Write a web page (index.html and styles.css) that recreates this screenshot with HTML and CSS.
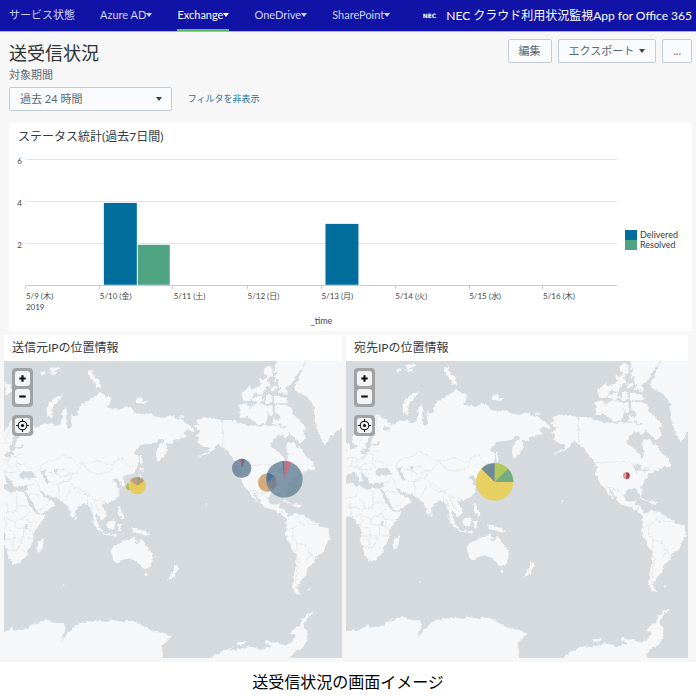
FILE: index.html
```html
<!DOCTYPE html>
<html lang="ja">
<head>
<meta charset="utf-8">
<meta name="viewport" content="width=device-width, initial-scale=1">
<title>送受信状況</title>
<link rel="stylesheet" href="styles.css">
</head>
<body>
<svg class="defs" aria-hidden="true">
  <defs>
    <filter id="coast" x="0" y="0" width="1100" height="1000" filterUnits="userSpaceOnUse">
      <feTurbulence type="fractalNoise" baseFrequency="0.09" numOctaves="3" seed="4" result="n"/>
      <feDisplacementMap in="SourceGraphic" in2="n" scale="13" xChannelSelector="R" yChannelSelector="G"/>
    </filter>
    <g id="world">
      <rect class="sea" x="0" y="0" width="1100" height="1000"/>
      <g filter="url(#coast)">
        <g class="land">
          <!-- Eurasia and Africa -->
          <path d="M0 350 18 352 34 344 46 338 55 332 42 330 36 318 38 302 55 290 64 270 78 252 96 242 112 237 124 246 140 256 152 264 150 276 136 274 130 270 133 285 146 288 150 274 164 268 176 260 196 256 214 262 230 256 234 236 236 214 246 208 250 228 246 256 254 272 264 262 260 242 258 222 268 236 280 232 282 214 298 196 320 184 336 172 348 162 362 175 380 178 378 194 368 206 384 212 410 214 430 205 446 212 452 226 470 228 490 226 510 235 540 240 560 232 576 240 590 246 606 256 626 272 628 282 606 275 598 286 612 296 594 300 576 306 562 318 546 314 546 322 548 336 540 354 524 372 515 358 518 334 530 318 542 306 526 306 514 314 492 318 470 320 456 334 450 350 464 354 463 374 456 394 440 408 426 412 416 418 424 440 414 444 408 428 398 420 386 426 394 434 398 446 408 456 408 468 396 484 380 492 366 496 352 500 358 512 366 520 368 534 356 545 346 540 340 526 335 532 340 555 349 576 336 562 326 536 320 512 310 499 300 495 290 502 276 516 266 542 258 522 248 502 238 494 224 480 200 476 184 468 173 458 168 462 182 480 206 488 212 500 196 512 166 530 158 520 142 492 129 462 120 462 134 494 150 520 162 532 184 528 178 544 164 562 150 582 152 604 140 620 132 640 124 658 104 676 86 680 77 664 68 636 61 620 65 592 55 566 44 552 30 544 0 540Z"/>
          <!-- North America -->
          <path d="M640 246 662 236 690 240 716 250 746 247 766 256 800 262 830 266 852 260 880 264 906 270 922 280 912 288 896 290 880 292 868 306 862 322 874 338 892 348 904 368 912 362 910 344 904 326 912 312 930 316 944 328 956 336 962 352 984 370 992 390 974 396 956 404 940 410 924 420 914 438 900 456 907 474 903 484 894 466 880 461 858 466 851 482 860 499 876 500 888 494 884 510 898 512 905 524 912 536 926 542 916 548 902 540 888 526 868 516 846 510 828 490 814 466 805 460 814 478 824 494 810 482 794 458 780 446 768 420 771 396 762 378 746 360 732 338 714 326 700 318 690 336 664 350 638 358 672 340 680 330 660 326 640 314 646 300 634 290 650 284 640 270 628 266 642 258Z"/>
          <!-- South America -->
          <path d="M904 555 918 535 936 527 960 531 975 542 1000 556 1010 568 1034 575 1041 592 1030 616 1016 642 998 656 988 676 974 690 966 710 954 726 944 740 941 756 952 772 934 766 925 742 930 710 936 680 938 652 924 636 914 610 904 590 908 574Z"/>
          <!-- Greenland -->
          <path d="M972 40 962 84 944 120 930 148 944 166 966 174 984 194 994 222 992 248 1002 280 1014 312 1026 322 1036 300 1054 282 1080 264 1100 258 1100 40Z"/>
          <!-- Canadian Arctic -->
          <path d="M890 40 876 76 868 104 882 100 868 130 886 126 882 148 896 146 878 164 912 168 906 148 926 134 940 106 958 90 968 40Z"/>
          <path d="M838 92 862 84 868 118 848 120ZM826 124 854 120 858 146 832 148ZM778 160 798 144 806 156 830 142 846 154 832 172 812 166 800 188 780 190 770 176ZM766 202 786 194 802 216 796 238 768 236ZM802 202 826 196 850 206 852 236 844 258 818 260 806 246 794 240ZM804 182 828 172 842 186 818 198ZM846 168 864 168 866 196 846 196ZM850 204 864 202 868 230 854 232ZM862 146 880 144 876 158 860 160Z"/>
          <path d="M870 172 906 180 914 196 870 196ZM870 202 902 200 922 208 930 232 948 246 968 274 956 284 966 304 950 316 930 298 910 282 906 262 896 266 882 252 890 236 876 224ZM868 240 888 250 882 262 864 258ZM894 284 910 280 916 294 902 300Z"/>
          <!-- Australia and Oceania -->
          <path d="M380 640 386 625 400 620 414 612 426 602 440 603 452 597 454 610 464 620 472 598 480 612 486 626 500 640 509 655 504 676 492 692 476 691 466 678 454 672 440 660 416 665 400 675 388 673 386 656Z"/>
          <path d="M478 704 492 706 486 716ZM573 680 586 692 574 706 566 702ZM566 704 572 710 560 726 548 728ZM438 568 458 572 484 580 502 594 480 592 464 586 450 582ZM368 558 388 542 396 556 388 574 372 572ZM320 542 340 560 362 582 350 584 334 564ZM358 584 400 590 402 595 360 590ZM402 562 416 560 408 568 412 580 402 578ZM400 505 410 510 412 524 422 540 412 544 404 522ZM162 612 180 602 174 638 160 644Z"/>
          <!-- Japan, Sakhalin, Arctic islands -->
          <path d="M468 344 474 352 474 382 468 376ZM466 388 482 396 468 402ZM468 406 474 424 456 436 436 440 430 450 428 440 448 430 464 418ZM238 168 228 184 210 200 203 222 208 240 190 236 187 214 200 190 220 174ZM312 96 326 98 330 118 346 130 352 150 336 146 330 130 316 118ZM166 104 184 98 188 108 172 112ZM194 90 224 86 226 96 200 100ZM194 104 220 102 208 112ZM455 180 472 178 476 190 494 188 480 198 456 194ZM586 232 600 234 590 240ZM60 130 78 140 82 160 66 172ZM18 326 30 330 30 352 18 356ZM272 532 280 540 274 546ZM894 486 920 494 926 500 906 494ZM932 498 954 502 950 508 930 504ZM970 752 980 754 974 758ZM980 382 994 386 992 396 976 392ZM236 738 242 740 240 744ZM664 496 670 500 666 504Z"/>
          <!-- Antarctica -->
          <path d="M0 890 40 886 62 884 82 868 90 878 130 870 156 856 188 844 216 856 240 856 244 876 230 912 250 884 284 856 320 850 342 848 370 852 380 844 404 850 450 848 476 862 504 880 532 880 560 896 548 912 532 924 538 952 540 1000 0 1000ZM640 1000 690 950 728 936 752 924 734 938 770 932 800 924 832 936 864 924 838 914 848 908 872 914 904 920 926 910 936 894 918 884 934 870 948 862 952 846 972 828 990 820 966 846 960 866 970 880 970 906 956 930 928 944 918 962 944 1000ZM758 912 782 912 780 922 760 920ZM1048 1000 1060 968 1080 954 1100 950 1100 1000Z"/>
        </g>
        <g class="sea">
          <path d="M0 432 20 420 40 412 50 420 62 440 70 430 60 414 70 412 84 434 92 446 130 442 132 456 118 462 96 458 82 466 60 452 44 452 40 444 20 446 0 452Z"/>
          <path d="M106 408 118 398 130 402 140 398 156 414 140 422 108 420ZM172 400 188 392 184 404 190 424 196 434 182 436 178 416ZM210 392 220 390 218 402 210 402ZM96 290 106 292 98 310 92 326 102 330 90 336 84 354 64 360 60 346 74 342 84 318 84 302ZM100 324 120 322 118 330 102 332ZM122 560 132 562 128 572 122 568Z"/>
          <path d="M876 392 892 388 906 394 900 400 906 410 894 402 888 416 884 402ZM906 408 928 400 922 408 908 414Z"/>
        </g>
        <g class="border">
          <path d="M716 250V328M764 382H868M868 382 908 404 936 392M798 456 836 468 852 482M870 516 876 504M888 524 898 514"/>
          <path d="M172 400 170 384 190 370 216 364 236 350 262 362 290 378 316 376 340 368 366 376 388 382 396 366 416 360 430 382 452 388M300 380 314 400 346 410 380 400 388 384M296 382 280 400 262 412 256 430 274 446 300 460 318 468 330 488 350 486 368 496M192 404 214 404 232 416 256 410M196 434 222 440 240 430 256 430M222 440 226 478M240 494 250 474 262 446M274 446 270 456 296 470 312 470 310 498M150 424 164 440 170 462M130 444 150 440M136 468 152 466 170 480M158 520 182 508 196 490M330 490 342 512 352 528M320 492 324 520M164 400 180 372M214 402 240 394 262 412"/>
          <path d="M18 490 46 484 72 502 72 520 98 520 98 468M98 504 134 504M72 520 66 540 92 552 120 540 140 516M22 516 60 520M50 484 52 458M40 540 60 536 66 556 60 572 88 580 90 600 64 604M92 552 96 570 124 570 150 584M120 540 138 550 162 556M120 570 118 596 148 604M90 600 112 606 118 596M88 608 86 640 70 640M112 606 106 630 88 640M106 630 124 642M138 550 138 576M30 500 34 544"/>
          <path d="M18 372 38 366 52 374 70 366 72 388 98 384 106 404M38 366 34 390 18 400M52 374 50 398 34 392M50 398 74 404 96 402M72 388 62 400 66 414M74 404 88 420M70 366 96 354 116 346M96 354 100 380 124 378 146 392M112 242 106 264 112 290M58 330 64 302 82 262 108 250"/>
          <path d="M944 530 948 556 968 560 974 544M948 556 926 574 908 576M968 560 1000 560M926 574 926 600 942 616 966 622 974 640 990 660M942 616 938 640M966 640 978 652 970 668M938 650 944 680 936 720 936 750M988 538 990 556"/>
        </g>
      </g>
    </g>
    <g id="locate">
      <circle cx="7" cy="7" r="4" fill="none" stroke="currentColor"/>
      <path d="M7 1v2M7 11v2M1 7h2M11 7h2" stroke="currentColor"/>
      <circle cx="7" cy="7" r="1.500" fill="currentColor"/>
    </g>
  </defs>
</svg>

<header class="topbar">
  <nav class="nav" aria-label="メイン">
    <a href="#">サービス状態</a>
    <a href="#">Azure AD<i class="caret"></i></a>
    <a href="#" class="active" aria-current="page">Exchange<i class="caret"></i></a>
    <a href="#">OneDrive<i class="caret"></i></a>
    <a href="#">SharePoint<i class="caret"></i></a>
  </nav>
  <div class="brand"><span class="logo">NEC</span><span>NEC クラウド利用状況監視App for Office 365</span></div>
</header>

<main class="page">
  <section class="head">
    <div class="intro">
      <h1>送受信状況</h1>
      <label for="period">対象期間</label>
    </div>
    <div class="actions">
      <button type="button" class="btn">編集</button>
      <button type="button" class="btn">エクスポート<i class="caret"></i></button>
      <button type="button" class="btn">...</button>
    </div>
  </section>
  <div class="filters">
    <div class="select">
      <select id="period"><option>過去 24 時間</option></select>
      <i class="caret"></i>
    </div>
    <a href="#">フィルタを非表示</a>
  </div>

  <section class="panel stats">
    <h2>ステータス統計(過去7日間)</h2>
    <div class="chart">
      <svg class="plot" viewBox="0 0 612 180" role="img" aria-label="ステータス統計">
        <path class="grid" d="M17 10H609M17 52H609M17 94H609"/>
        <path class="axis" d="M17 139V136H609M91 136V139M164 136V139M239 136V139M313 136V139M387 136V139M461 136V139M534 136V139"/>
        <g class="delivered"><rect x="95" y="53" width="33" height="82"/><rect x="317" y="74" width="33" height="61"/></g>
        <rect class="resolved" x="129" y="95" width="32" height="40"/>
        <g class="ylab"><text x="13" y="14">6</text><text x="13" y="56">4</text><text x="13" y="98">2</text></g>
        <g class="xlab">
          <text x="17" y="149">5/9 (木)</text><text x="17" y="160">2019</text>
          <text x="91" y="149">5/10 (金)</text><text x="165" y="149">5/11 (土)</text>
          <text x="239" y="149">5/12 (日)</text><text x="313" y="149">5/13 (月)</text>
          <text x="387" y="149">5/14 (火)</text><text x="461" y="149">5/15 (水)</text>
          <text x="535" y="149">5/16 (木)</text>
        </g>
        <text class="xtitle" x="313" y="174">_time</text>
      </svg>
      <ul class="legend">
        <li><i class="key-delivered"></i>Delivered</li>
        <li><i class="key-resolved"></i>Resolved</li>
      </ul>
    </div>
  </section>

  <div class="maps">
    <section class="panel">
      <h2>送信元IPの位置情報</h2>
      <div class="map">
        <svg viewBox="60 69 1014 891" role="img" aria-label="送信元IPの地図">
          <use href="#world"/>
          <g opacity=".85">
            <circle cx="436" cy="446" r="10" fill="#a9b84a"/>
            <circle cx="460" cy="443" r="26" fill="#e8cb45"/>
            <path d="M460 443 438 429A26 26 0 0 1 460 417Z" fill="#bd9072"/>
            <path d="M460 443V417A26 26 0 0 1 470 419Z" fill="#4a9b78"/>
            <path d="M460 443 470 419A26 26 0 0 1 481 428Z" fill="#c28860"/>
          </g>
          <g opacity=".8">
            <circle cx="773" cy="391" r="29" fill="#617c91"/>
            <path d="M773 391 766 363A29 29 0 0 1 773 362Z" fill="#a64b65"/>
            <path d="M773 391V362A29 29 0 0 1 783 364Z" fill="#374a79"/>
            <circle cx="850" cy="434" r="28" fill="#ce995f"/>
            <path d="M850 434V406A28 28 0 0 1 877 426Z" fill="#3e6f9b"/>
          </g>
          <g opacity=".85">
            <circle cx="901" cy="424" r="55" fill="#6c889a"/>
            <path d="M901 424V369A55 55 0 0 1 921 373Z" fill="#c95868"/>
            <path d="M901 424 895 369H901Z" fill="#3f6798"/>
            <path d="M849 406A28 28 0 0 1 878 434 28 28 0 0 1 868 455 55 55 0 0 1 849 406Z" fill="#6e6f82" opacity=".5"/>
            <path d="M850 406A28 28 0 0 1 868 413L850 434Z" fill="#356b94" opacity=".7"/>
          </g>
        </svg>
        <div class="controls">
          <div class="ctl"><button type="button" aria-label="拡大"><svg viewBox="0 0 14 14"><path d="M7 4v6M4 7h6" stroke="currentColor" stroke-width="2"/></svg></button><button type="button" aria-label="縮小"><svg viewBox="0 0 14 14"><path d="M4 7h6" stroke="currentColor" stroke-width="2"/></svg></button></div>
          <div class="ctl"><button type="button" aria-label="現在地"><svg viewBox="0 0 14 14"><use href="#locate"/></svg></button></div>
        </div>
      </div>
    </section>
    <section class="panel">
      <h2>宛先IPの位置情報</h2>
      <div class="map">
        <svg viewBox="18 78 1026 891" role="img" aria-label="宛先IPの地図">
          <use href="#world"/>
          <g opacity=".9">
            <circle cx="464" cy="441" r="56" fill="#e8cf55"/>
            <path d="M464 441V385A56 56 0 0 1 504 401Z" fill="#afc44c"/>
            <path d="M464 441 504 401A56 56 0 0 1 520 441Z" fill="#69a877"/>
            <path d="M464 441 424 401A56 56 0 0 1 464 385Z" fill="#63828c"/>
          </g>
          <circle cx="859" cy="422" r="10" fill="#d4a09b"/>
          <path d="M859 412A10 10 0 0 1 859 432Z" fill="#b23d50"/>
        </svg>
        <div class="controls">
          <div class="ctl"><button type="button" aria-label="拡大"><svg viewBox="0 0 14 14"><path d="M7 4v6M4 7h6" stroke="currentColor" stroke-width="2"/></svg></button><button type="button" aria-label="縮小"><svg viewBox="0 0 14 14"><path d="M4 7h6" stroke="currentColor" stroke-width="2"/></svg></button></div>
          <div class="ctl"><button type="button" aria-label="現在地"><svg viewBox="0 0 14 14"><use href="#locate"/></svg></button></div>
        </div>
      </div>
    </section>
  </div>
</main>
<p class="caption">送受信状況の画面イメージ</p>
</body>
</html>
```
FILE: styles.css
```css
* {
  box-sizing: border-box;
}

body {
  margin: 0;
  background: #fff;
  color: #333c45;
  font-family: Lato, "Noto Sans CJK JP", sans-serif;
  font-size: 11px;
  line-height: 16px;
}

h1,
h2,
p,
ul {
  margin: 0;
  padding: 0;
  font-weight: 400;
}

a {
  text-decoration: none;
}

.defs {
  position: absolute;
  width: 0;
  height: 0;
}

.caret {
  display: inline-block;
  border: 3px solid transparent;
  border-top: 4px solid currentColor;
  border-bottom: 0;
  vertical-align: 2px;
}

.topbar {
  display: flex;
  justify-content: space-between;
  height: 32px;
  padding: 0 4px 0 9px;
  background: #1013a5;
  border-bottom: 1px solid #aaaed8;
  color: #fff;
  white-space: nowrap;
}

.nav {
  display: flex;
  gap: 25px;
}

.nav a {
  color: #d3d5f2;
  line-height: 30px;
}

.nav .active {
  color: #fff;
  border-bottom: 2px solid #5cc05c;
}

.brand {
  display: flex;
  align-items: center;
  gap: 10px;
  font-size: 12px;
}

.logo {
  font: bold 6px/8px "DejaVu Sans", sans-serif;
}

.page {
  background: #f7f7f7;
  padding: 7px 4px 4px;
}

.head {
  display: flex;
  justify-content: space-between;
  padding-left: 5px;
}

h1 {
  font-size: 18px;
  line-height: 28px;
  color: #2b3033;
}

.intro label {
  display: block;
  color: #5c6773;
}

.actions {
  display: flex;
  align-items: flex-start;
  gap: 6px;
}

.btn {
  height: 24px;
  padding: 0 10px;
  border: 1px solid #c3cbd4;
  border-radius: 2px;
  background: #f9fbfd;
  color: #5c6773;
  font: inherit;
  line-height: 20px;
}

.btn .caret {
  margin-left: 5px;
  color: #3c444d;
}

.filters {
  display: flex;
  align-items: center;
  gap: 16px;
  margin: 4px 5px 12px;
}

.filters a {
  color: #1e7393;
  font-size: 9px;
}

.select {
  position: relative;
  width: 24%;
}

.select select {
  display: block;
  appearance: none;
  width: 100%;
  height: 24px;
  padding: 0 10px;
  border: 1px solid #c3cbd4;
  border-radius: 2px;
  background: #f9fbfd;
  color: #5c6773;
  font: inherit;
}

.select .caret {
  position: absolute;
  top: 10px;
  right: 10px;
  color: #3c444d;
  pointer-events: none;
}

.panel {
  background: #fff;
}

.panel h2 {
  padding: 5px 8px;
  font-size: 12px;
}

.stats {
  margin: 0 0 4px 5px;
}

.stats h2 {
  padding: 6px 9px 5px;
}

.chart {
  display: flex;
  align-items: center;
  gap: 5px;
  padding: 0 14px 1px 0;
}

.plot {
  flex: 1;
  min-width: 0;
  display: block;
}

.plot text {
  fill: #3f4750;
  font-size: 8px;
}

.grid,
.axis {
  fill: none;
  stroke: #e3e6e8;
  shape-rendering: crispEdges;
}

.axis {
  stroke: #c3cbd4;
}

.delivered {
  fill: #006d9c;
}

.resolved {
  fill: #4fa484;
}

.ylab {
  text-anchor: end;
}

.plot .xtitle {
  text-anchor: middle;
  font-size: 9px;
}

.legend {
  list-style: none;
  font-size: 9px;
  line-height: 10px;
}

.legend li {
  display: flex;
  gap: 3px;
}

.legend i {
  width: 12px;
}

.key-delivered {
  background: #006d9c;
}

.key-resolved {
  background: #4fa484;
}

.maps {
  display: grid;
  grid-template-columns: 338fr 342fr;
  gap: 4px;
  margin-right: 4px;
}

.map {
  position: relative;
}

.map > svg {
  display: block;
  width: 100%;
  height: auto;
}

.sea {
  fill: #d5dadf;
}

.land {
  fill: #f6f7f8;
}

.border {
  fill: none;
  stroke: #dcdfe2;
  stroke-width: 2;
}

.controls {
  position: absolute;
  top: 7px;
  left: 8px;
  display: grid;
  gap: 8px;
}

.ctl {
  display: grid;
  gap: 3px;
  padding: 3px;
  border-radius: 4px;
  background: #a0a3a6;
}

.ctl button {
  width: 15px;
  height: 15px;
  padding: 0;
  border: 0;
  border-radius: 3px;
  background: #f3f4f5;
  color: #111;
}

.ctl svg {
  display: block;
  width: 100%;
}

.caption {
  padding: 8px 0;
  color: #000;
  font-size: 16px;
  line-height: 24px;
  text-align: center;
}
```
